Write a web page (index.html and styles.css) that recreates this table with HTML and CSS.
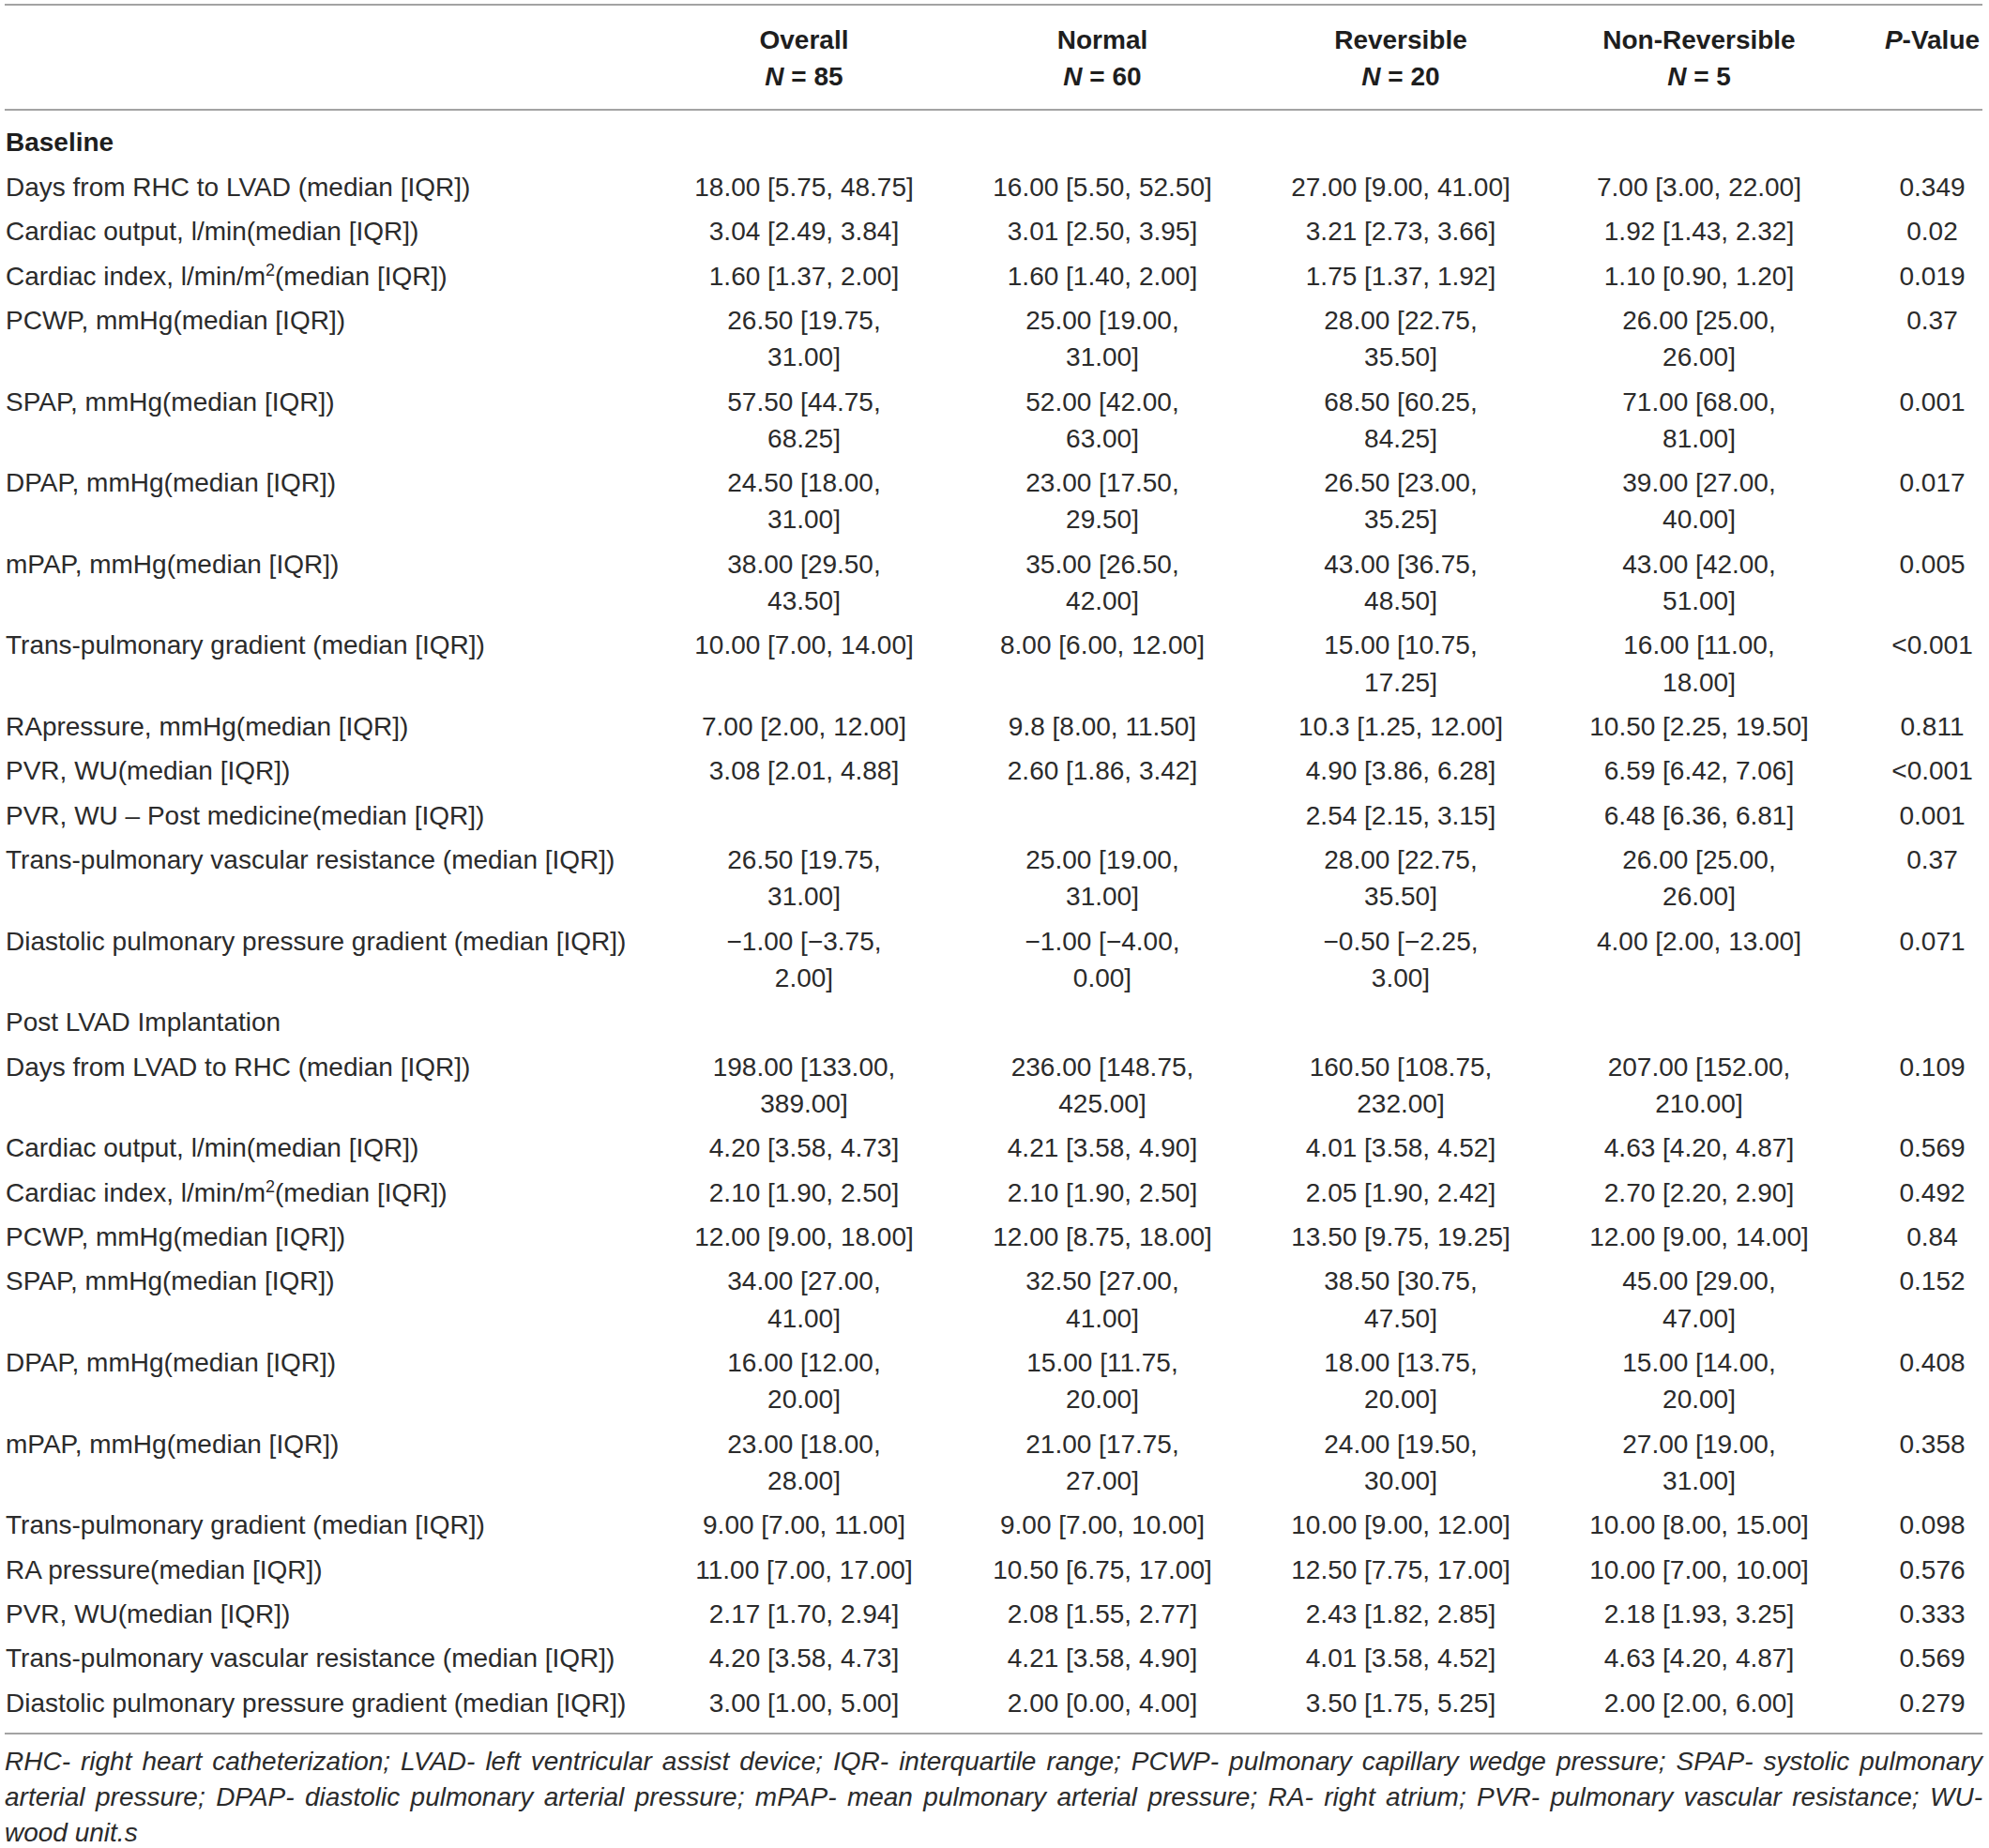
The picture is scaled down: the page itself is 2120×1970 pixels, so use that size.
FILE: index.html
```html
<!DOCTYPE html>
<html lang="en">
<head>
<meta charset="utf-8">
<title>Table</title>
<link rel="stylesheet" href="styles.css">
</head>
<body>
<div class="wrap">
<table class="data">
  <colgroup>
    <col class="c-label">
    <col class="c-val">
    <col class="c-val">
    <col class="c-val">
    <col class="c-val">
    <col class="c-p">
  </colgroup>
  <thead>
    <tr>
      <th></th>
      <th>Overall<br><i>N</i> = 85</th>
      <th>Normal<br><i>N</i> = 60</th>
      <th>Reversible<br><i>N</i> = 20</th>
      <th>Non-Reversible<br><i>N</i> = 5</th>
      <th class="p"><i>P</i>-Value</th>
    </tr>
  </thead>
  <tbody>
    <tr class="first"><td class="sec">Baseline</td><td></td><td></td><td></td><td></td><td class="p"></td></tr>
    <tr><td>Days from RHC to LVAD (median [IQR])</td><td>18.00 [5.75, 48.75]</td><td>16.00 [5.50, 52.50]</td><td>27.00 [9.00, 41.00]</td><td>7.00 [3.00, 22.00]</td><td class="p">0.349</td></tr>
    <tr><td>Cardiac output, l/min(median [IQR])</td><td>3.04 [2.49, 3.84]</td><td>3.01 [2.50, 3.95]</td><td>3.21 [2.73, 3.66]</td><td>1.92 [1.43, 2.32]</td><td class="p">0.02</td></tr>
    <tr><td>Cardiac index, l/min/m<sup>2</sup>(median [IQR])</td><td>1.60 [1.37, 2.00]</td><td>1.60 [1.40, 2.00]</td><td>1.75 [1.37, 1.92]</td><td>1.10 [0.90, 1.20]</td><td class="p">0.019</td></tr>
    <tr><td>PCWP, mmHg(median [IQR])</td><td>26.50 [19.75,<br>31.00]</td><td>25.00 [19.00,<br>31.00]</td><td>28.00 [22.75,<br>35.50]</td><td>26.00 [25.00,<br>26.00]</td><td class="p">0.37</td></tr>
    <tr><td>SPAP, mmHg(median [IQR])</td><td>57.50 [44.75,<br>68.25]</td><td>52.00 [42.00,<br>63.00]</td><td>68.50 [60.25,<br>84.25]</td><td>71.00 [68.00,<br>81.00]</td><td class="p">0.001</td></tr>
    <tr><td>DPAP, mmHg(median [IQR])</td><td>24.50 [18.00,<br>31.00]</td><td>23.00 [17.50,<br>29.50]</td><td>26.50 [23.00,<br>35.25]</td><td>39.00 [27.00,<br>40.00]</td><td class="p">0.017</td></tr>
    <tr><td>mPAP, mmHg(median [IQR])</td><td>38.00 [29.50,<br>43.50]</td><td>35.00 [26.50,<br>42.00]</td><td>43.00 [36.75,<br>48.50]</td><td>43.00 [42.00,<br>51.00]</td><td class="p">0.005</td></tr>
    <tr><td>Trans-pulmonary gradient (median [IQR])</td><td>10.00 [7.00, 14.00]</td><td>8.00 [6.00, 12.00]</td><td>15.00 [10.75,<br>17.25]</td><td>16.00 [11.00,<br>18.00]</td><td class="p">&lt;0.001</td></tr>
    <tr><td>RApressure, mmHg(median [IQR])</td><td>7.00 [2.00, 12.00]</td><td>9.8 [8.00, 11.50]</td><td>10.3 [1.25, 12.00]</td><td>10.50 [2.25, 19.50]</td><td class="p">0.811</td></tr>
    <tr><td>PVR, WU(median [IQR])</td><td>3.08 [2.01, 4.88]</td><td>2.60 [1.86, 3.42]</td><td>4.90 [3.86, 6.28]</td><td>6.59 [6.42, 7.06]</td><td class="p">&lt;0.001</td></tr>
    <tr><td>PVR, WU – Post medicine(median [IQR])</td><td></td><td></td><td>2.54 [2.15, 3.15]</td><td>6.48 [6.36, 6.81]</td><td class="p">0.001</td></tr>
    <tr><td>Trans-pulmonary vascular resistance (median [IQR])</td><td>26.50 [19.75,<br>31.00]</td><td>25.00 [19.00,<br>31.00]</td><td>28.00 [22.75,<br>35.50]</td><td>26.00 [25.00,<br>26.00]</td><td class="p">0.37</td></tr>
    <tr><td>Diastolic pulmonary pressure gradient (median [IQR])</td><td>−1.00 [−3.75,<br>2.00]</td><td>−1.00 [−4.00,<br>0.00]</td><td>−0.50 [−2.25,<br>3.00]</td><td>4.00 [2.00, 13.00]</td><td class="p">0.071</td></tr>
    <tr><td>Post LVAD Implantation</td><td></td><td></td><td></td><td></td><td class="p"></td></tr>
    <tr><td>Days from LVAD to RHC (median [IQR])</td><td>198.00 [133.00,<br>389.00]</td><td>236.00 [148.75,<br>425.00]</td><td>160.50 [108.75,<br>232.00]</td><td>207.00 [152.00,<br>210.00]</td><td class="p">0.109</td></tr>
    <tr><td>Cardiac output, l/min(median [IQR])</td><td>4.20 [3.58, 4.73]</td><td>4.21 [3.58, 4.90]</td><td>4.01 [3.58, 4.52]</td><td>4.63 [4.20, 4.87]</td><td class="p">0.569</td></tr>
    <tr><td>Cardiac index, l/min/m<sup>2</sup>(median [IQR])</td><td>2.10 [1.90, 2.50]</td><td>2.10 [1.90, 2.50]</td><td>2.05 [1.90, 2.42]</td><td>2.70 [2.20, 2.90]</td><td class="p">0.492</td></tr>
    <tr><td>PCWP, mmHg(median [IQR])</td><td>12.00 [9.00, 18.00]</td><td>12.00 [8.75, 18.00]</td><td>13.50 [9.75, 19.25]</td><td>12.00 [9.00, 14.00]</td><td class="p">0.84</td></tr>
    <tr><td>SPAP, mmHg(median [IQR])</td><td>34.00 [27.00,<br>41.00]</td><td>32.50 [27.00,<br>41.00]</td><td>38.50 [30.75,<br>47.50]</td><td>45.00 [29.00,<br>47.00]</td><td class="p">0.152</td></tr>
    <tr><td>DPAP, mmHg(median [IQR])</td><td>16.00 [12.00,<br>20.00]</td><td>15.00 [11.75,<br>20.00]</td><td>18.00 [13.75,<br>20.00]</td><td>15.00 [14.00,<br>20.00]</td><td class="p">0.408</td></tr>
    <tr><td>mPAP, mmHg(median [IQR])</td><td>23.00 [18.00,<br>28.00]</td><td>21.00 [17.75,<br>27.00]</td><td>24.00 [19.50,<br>30.00]</td><td>27.00 [19.00,<br>31.00]</td><td class="p">0.358</td></tr>
    <tr><td>Trans-pulmonary gradient (median [IQR])</td><td>9.00 [7.00, 11.00]</td><td>9.00 [7.00, 10.00]</td><td>10.00 [9.00, 12.00]</td><td>10.00 [8.00, 15.00]</td><td class="p">0.098</td></tr>
    <tr><td>RA pressure(median [IQR])</td><td>11.00 [7.00, 17.00]</td><td>10.50 [6.75, 17.00]</td><td>12.50 [7.75, 17.00]</td><td>10.00 [7.00, 10.00]</td><td class="p">0.576</td></tr>
    <tr><td>PVR, WU(median [IQR])</td><td>2.17 [1.70, 2.94]</td><td>2.08 [1.55, 2.77]</td><td>2.43 [1.82, 2.85]</td><td>2.18 [1.93, 3.25]</td><td class="p">0.333</td></tr>
    <tr><td>Trans-pulmonary vascular resistance (median [IQR])</td><td>4.20 [3.58, 4.73]</td><td>4.21 [3.58, 4.90]</td><td>4.01 [3.58, 4.52]</td><td>4.63 [4.20, 4.87]</td><td class="p">0.569</td></tr>
    <tr class="last"><td>Diastolic pulmonary pressure gradient (median [IQR])</td><td>3.00 [1.00, 5.00]</td><td>2.00 [0.00, 4.00]</td><td>3.50 [1.75, 5.25]</td><td>2.00 [2.00, 6.00]</td><td class="p">0.279</td></tr>
  </tbody>
</table>
<p class="note">RHC- right heart catheterization; LVAD- left ventricular assist device; IQR- interquartile range; PCWP- pulmonary capillary wedge pressure; SPAP- systolic pulmonary arterial pressure; DPAP- diastolic pulmonary arterial pressure; mPAP- mean pulmonary arterial pressure; RA- right atrium; PVR- pulmonary vascular resistance; WU- wood unit.s</p>
</div>
</body>
</html>
```

FILE: styles.css
```css
html, body {
  margin: 0;
  padding: 0;
  background: #ffffff;
}

body {
  font-family: "Liberation Sans", Arial, sans-serif;
  color: #2b2b2b;
}

.wrap {
  margin: 0 7px 0 5px;
  padding-top: 4px;
}

.data {
  width: 2108px;
  border-collapse: collapse;
  table-layout: fixed;
  font-size: 28px;
  line-height: 39.2px;
}

.c-label { width: 693px; }
.c-val { width: 318px; }
.c-p { width: 143px; }

.data th {
  font-weight: bold;
  color: #1e1e1e;
  text-align: center;
  vertical-align: top;
  padding: 17px 0 15px;
  border-top: 2px solid #a3a3a3;
  border-bottom: 2px solid #a3a3a3;
}

.data td {
  text-align: center;
  vertical-align: top;
  padding: 4.1px 0;
  white-space: nowrap;
}

.data td:first-child {
  text-align: left;
  padding-left: 1px;
}

.data .p {
  padding-left: 36px;
}

.data tr.first td {
  padding-top: 14px;
}

.data tr.last td {
  padding-bottom: 12px;
  border-bottom: 2px solid #a3a3a3;
}

.data td.sec {
  font-weight: bold;
  color: #1e1e1e;
}

.data sup {
  font-size: 18px;
  line-height: 0;
  vertical-align: 10px;
}

.note {
  margin: 10px 0 0;
  font-size: 28px;
  line-height: 37.8px;
  font-style: italic;
  text-align: justify;
  color: #2b2b2b;
}
```
